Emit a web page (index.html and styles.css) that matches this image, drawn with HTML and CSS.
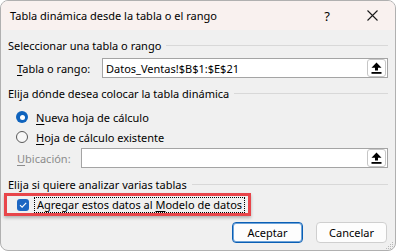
FILE: index.html
```html
<!DOCTYPE html>
<html lang="es">
<head>
    <meta charset="UTF-8">
    <title>Tabla dinámica desde la tabla o el rango</title>
    <link rel="stylesheet" href="styles.css">
</head>
<body>
    <div class="dialog">
        <div class="titlebar">
            <span class="title">Tabla dinámica desde la tabla o el rango</span>
            <span class="help">?</span>
            <span class="close">
                <svg width="11" height="11" viewBox="0 0 11 11"><path d="M0.5 0.5 L10.5 10.5 M10.5 0.5 L0.5 10.5" stroke="#1a1a1a" stroke-width="1.1" fill="none"/></svg>
            </span>
        </div>

        <div class="content">
            <div class="group-head">
                <span>Seleccionar una tabla o rango</span>
                <i class="rule"></i>
            </div>
            <div class="field-row">
                <label class="field-label range-label"><u>T</u>abla o rango:</label>
                <div class="textbox">
                    <span class="value">Datos_Ventas!$B$1:$E$21</span>
                    <span class="pick">
                        <svg width="11" height="12" viewBox="0 0 11 12"><path d="M5.5 0.5 L10.5 5.8 L7 5.8 L7 8.6 L4 8.6 L4 5.8 L0.5 5.8 Z" fill="#000"/><rect x="0.5" y="10" width="10" height="1.8" fill="#000"/></svg>
                    </span>
                </div>
            </div>

            <div class="group-head second">
                <span>Elija dónde desea colocar la tabla dinámica</span>
                <i class="rule"></i>
            </div>
            <div class="radio-row first">
                <span class="radio checked"></span>
                <span><u>N</u>ueva hoja de cálculo</span>
            </div>
            <div class="radio-row">
                <span class="radio"></span>
                <span><u>H</u>oja de cálculo existente</span>
            </div>
            <div class="field-row location">
                <label class="field-label place-label disabled"><u>U</u>bicación:</label>
                <div class="textbox">
                    <span class="value"></span>
                    <span class="pick">
                        <svg width="11" height="12" viewBox="0 0 11 12"><path d="M5.5 0.5 L10.5 5.8 L7 5.8 L7 8.6 L4 8.6 L4 5.8 L0.5 5.8 Z" fill="#000"/><rect x="0.5" y="10" width="10" height="1.8" fill="#000"/></svg>
                    </span>
                </div>
            </div>

            <div class="group-head third">
                <span>Elija si quiere analizar varias tablas</span>
                <i class="rule"></i>
            </div>
            <div class="highlight">
                <span class="checkbox">
                    <svg width="12" height="12" viewBox="0 0 12 12"><path d="M3 6.2 L5.1 8.2 L9.2 3.8" stroke="#fff" stroke-width="1.1" fill="none"/></svg>
                </span>
                <span class="focus">Agregar estos datos al <u>M</u>odelo de datos</span>
            </div>

            <div class="buttons">
                <button class="btn primary">Aceptar</button>
                <button class="btn">Cancelar</button>
            </div>
        </div>

        <svg class="grip" width="9" height="9" viewBox="0 0 9 9">
            <rect x="7" y="1" width="1" height="1" fill="#b8b8b8"/>
            <rect x="5" y="3" width="1" height="1" fill="#b8b8b8"/>
            <rect x="7" y="3" width="1" height="1" fill="#b8b8b8"/>
            <rect x="3" y="5" width="1" height="1" fill="#b8b8b8"/>
            <rect x="5" y="5" width="1" height="1" fill="#b8b8b8"/>
            <rect x="7" y="5" width="1" height="1" fill="#b8b8b8"/>
            <rect x="1" y="7" width="1" height="1" fill="#b8b8b8"/>
            <rect x="3" y="7" width="1" height="1" fill="#b8b8b8"/>
            <rect x="5" y="7" width="1" height="1" fill="#b8b8b8"/>
            <rect x="7" y="7" width="1" height="1" fill="#b8b8b8"/>
        </svg>
    </div>
</body>
</html>
```

FILE: styles.css
```css
body {
    margin: 0;
    background-color: #fff;
    font-family: "Noto Sans", sans-serif;
    font-size: 11px;
    color: #000;
}

u {
    text-decoration: underline;
    text-underline-offset: 2px;
}

.dialog {
    position: relative;
    box-sizing: border-box;
    width: 396px;
    height: 251px;
    border: 1px solid #b0b0b0;
    border-radius: 8px;
    overflow: hidden;
    background-color: #f0f0f0;
    display: flex;
    flex-direction: column;
}

.titlebar {
    height: 29px;
    flex: none;
    background-color: #f9f1ef;
    display: flex;
    align-items: center;
    padding-left: 9px;
}

.title {
    flex: 1;
}

.help {
    width: 16px;
    text-align: center;
    font-size: 13px;
}

.close {
    width: 20px;
    margin-left: 27px;
    margin-right: 13px;
    display: flex;
    justify-content: center;
}

.content {
    padding: 0 7px;
    display: flex;
    flex-direction: column;
}

.group-head {
    height: 18px;
    margin-top: 6px;
    display: flex;
    align-items: center;
    gap: 5px;
}

.group-head.third {
    margin-top: 7px;
}

.rule {
    flex: 1;
    height: 1px;
    background-color: #d8d8d8;
}

.field-row {
    height: 20px;
    margin-top: 4px;
    display: flex;
    align-items: center;
}

.field-row.location {
    margin-top: 1px;
}

.field-label {
    padding-left: 9px;
    box-sizing: border-box;
}

.range-label {
    width: 94px;
}

.place-label {
    width: 73px;
}

.disabled {
    color: #8c8c8c;
}

.textbox {
    flex: 1;
    height: 20px;
    box-sizing: border-box;
    border: 1px solid #a4a4a4;
    background-color: #fff;
    display: flex;
    align-items: center;
    padding-left: 3px;
    padding-right: 1px;
}

.value {
    flex: 1;
}

.pick {
    width: 19px;
    height: 18px;
    box-sizing: border-box;
    border: 1px solid #c6c6c6;
    border-radius: 3px;
    background-color: #fff;
    display: flex;
    align-items: center;
    justify-content: center;
}

.radio-row {
    height: 20px;
    display: flex;
    align-items: center;
    gap: 8px;
    padding-left: 8px;
}

.radio-row.first {
    margin-top: 5px;
}

.radio {
    width: 12px;
    height: 12px;
    box-sizing: border-box;
    border-radius: 50%;
    border: 1px solid #595959;
    background-color: #f7f7f7;
}

.radio.checked {
    border: none;
    background-color: #0f63bd;
    display: flex;
    align-items: center;
    justify-content: center;
}

.radio.checked::after {
    content: "";
    width: 5px;
    height: 5px;
    border-radius: 50%;
    background-color: #fff;
}

.highlight {
    align-self: flex-start;
    height: 23px;
    box-sizing: border-box;
    margin-left: -4px;
    border: 3px solid #e8454a;
    box-shadow: 0 2px 3px rgba(0, 0, 0, 0.25);
    display: flex;
    align-items: center;
    padding: 0 3px 0 10px;
}

.checkbox {
    width: 12px;
    height: 12px;
    border-radius: 3px;
    background-color: #1c66c2;
    display: flex;
}

.focus {
    margin-left: 5px;
    border: 1px dotted #000;
    padding: 0 2px;
    line-height: 14px;
}

.buttons {
    margin-top: 6px;
    display: flex;
    justify-content: flex-end;
    gap: 13px;
    padding-right: 1px;
}

.btn {
    height: 21px;
    width: 71px;
    padding: 0;
    font-family: inherit;
    font-size: inherit;
    color: #000;
    background-color: #fdfdfd;
    border: 1px solid #cfcfcf;
    border-radius: 4px;
}

.btn.primary {
    border-color: #0a5fb5;
    box-shadow: inset 0 0 0 1px #6ea3d8;
}

.grip {
    position: absolute;
    right: 1px;
    bottom: 0;
}
```
